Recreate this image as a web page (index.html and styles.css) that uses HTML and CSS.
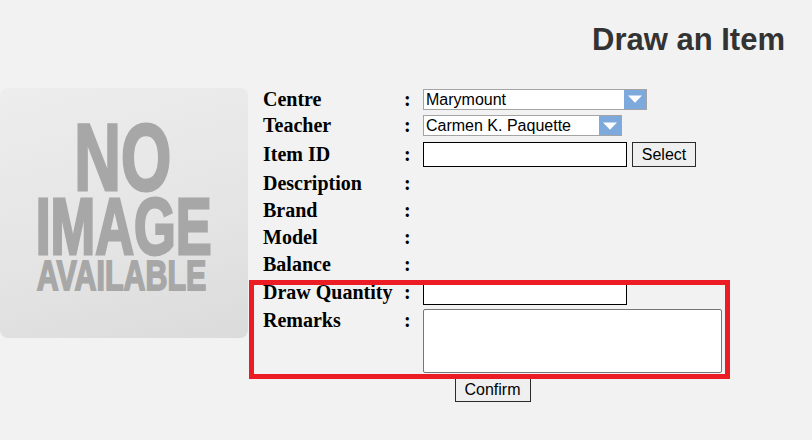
FILE: index.html
```html
<!DOCTYPE html>
<html>
<head>
<meta charset="utf-8">
<link rel="stylesheet" href="styles.css">
</head>
<body>
<div class="header"><h1>Draw an Item</h1></div>
<div class="main">
  <div class="noimage">
    <span class="ni ni-no">NO</span>
    <span class="ni ni-image">IMAGE</span>
    <span class="ni ni-available">AVAILABLE</span>
  </div>
  <div class="form">
    <div class="row r1">
      <span class="label">Centre</span><span class="colon">:</span>
      <span class="dd dd-centre"><select><option>Marymount</option></select><span class="arrow"><svg width="14" height="8" viewBox="0 0 14 8"><path d="M0 0.5 L14 0.5 L7 7.8 Z" fill="#fff"/></svg></span></span>
    </div>
    <div class="row r2">
      <span class="label">Teacher</span><span class="colon">:</span>
      <span class="dd dd-teacher"><select><option>Carmen K. Paquette</option></select><span class="arrow"><svg width="14" height="8" viewBox="0 0 14 8"><path d="M0 0.5 L14 0.5 L7 7.8 Z" fill="#fff"/></svg></span></span>
    </div>
    <div class="row r3">
      <span class="label">Item ID</span><span class="colon">:</span>
      <span class="field"><input type="text" class="txt"><button class="btn btn-select">Select</button></span>
    </div>
    <div class="row">
      <span class="label">Description</span><span class="colon">:</span>
    </div>
    <div class="row">
      <span class="label">Brand</span><span class="colon">:</span>
    </div>
    <div class="row">
      <span class="label">Model</span><span class="colon">:</span>
    </div>
    <div class="row">
      <span class="label">Balance</span><span class="colon">:</span>
    </div>
    <div class="row r8">
      <span class="label">Draw Quantity</span><span class="colon">:</span>
      <input type="text" class="txt">
    </div>
    <div class="row r9">
      <span class="label">Remarks</span><span class="colon">:</span>
      <textarea class="remarks"></textarea>
    </div>
    <div class="actions"><button class="btn btn-confirm">Confirm</button></div>
    <div class="highlight"></div>
  </div>
</div>
</body>
</html>
```
FILE: styles.css
```css
html, body {
  margin: 0;
  padding: 0;
  background: #f2f2f2;
}
body {
  font-family: "Liberation Sans", Arial, sans-serif;
  color: #000;
}
.header {
  padding: 22px 27px 0 0;
  text-align: right;
}
.header h1 {
  margin: 0;
  font-family: "Liberation Sans", Arial, sans-serif;
  font-weight: bold;
  font-size: 31px;
  line-height: 36px;
  color: #333;
}
.main {
  display: flex;
  align-items: flex-start;
  margin-top: 28px;
}
.noimage {
  box-sizing: border-box;
  width: 248px;
  height: 250px;
  margin-top: 2px;
  padding-top: 29px;
  border-radius: 8px;
  background: linear-gradient(165deg, #ededed 0%, #e4e4e4 60%, #dbdbdb 100%);
  overflow: hidden;
  flex: none;
  display: flex;
  flex-direction: column;
  align-items: center;
}
.ni {
  display: block;
  font-family: "Liberation Sans", Arial, sans-serif;
  font-weight: bold;
  color: #a7a7a7;
  -webkit-text-stroke: 3px #a7a7a7;
  white-space: nowrap;
  transform-origin: center;
}
.ni-no {
  font-size: 95px;
  line-height: 80px;
  height: 80px;
  transform: translateX(-1.5px) scaleX(0.68);
}
.ni-image {
  font-size: 80px;
  line-height: 60px;
  height: 60px;
  transform: translateX(-0.5px) scaleX(0.671);
}
.ni-available {
  font-size: 42px;
  line-height: 37px;
  height: 37px;
  -webkit-text-stroke: 1.8px #a7a7a7;
  transform: translateX(-2.5px) scaleX(0.724);
}
.form {
  position: relative;
  margin-left: 15px;
  display: flex;
  flex-direction: column;
}
.row {
  display: flex;
  align-items: center;
  height: 27px;
}
.r1 { height: 26px; }
.r3 { height: 31px; }
.r8 { height: 28px; }
.r9 { height: 67px; align-items: flex-start; }
.r9 .label, .r9 .colon, .r9 .remarks { margin-top: 3px; }
.label {
  width: 141px;
  flex: none;
  font-family: "Liberation Serif", "Times New Roman", serif;
  font-weight: bold;
  font-size: 20px;
  line-height: 23px;
  white-space: nowrap;
}
.colon {
  width: 19px;
  flex: none;
  font-family: "Liberation Serif", "Times New Roman", serif;
  font-weight: bold;
  font-size: 20px;
  line-height: 23px;
}
.dd {
  display: inline-flex;
  box-sizing: border-box;
  height: 21px;
  border: 1px solid #a4a4a4;
  background: #fff;
}
.dd-centre { width: 224px; }
.dd-teacher { width: 199px; }
.dd select {
  -webkit-appearance: none;
  appearance: none;
  border: none;
  outline: none;
  background: #fff;
  flex: 1;
  min-width: 0;
  height: 19px;
  padding: 0 0 0 2px;
  margin: 0;
  font-family: "Liberation Sans", Arial, sans-serif;
  font-size: 16px;
  color: #000;
}
.dd .arrow {
  width: 22px;
  height: 19px;
  flex: none;
  background: #7ea9dc;
  display: flex;
  align-items: center;
  justify-content: center;
}
.dd .arrow svg { display: block; }
.field {
  display: flex;
  align-items: center;
  gap: 5px;
}
.txt {
  box-sizing: border-box;
  width: 204px;
  height: 25px;
  margin: 0;
  border: 1px solid #000;
  background: #fff;
  padding: 0 3px;
  font-family: "Liberation Sans", Arial, sans-serif;
  font-size: 16px;
  outline: none;
}
.btn {
  box-sizing: border-box;
  height: 25px;
  margin: 0;
  padding: 0 8px;
  background: #efefef;
  border: 1px solid #2b2b2b;
  border-radius: 0;
  font-family: "Liberation Sans", Arial, sans-serif;
  font-size: 16px;
  color: #000;
}
.btn-select { width: 64px; }
.btn-confirm { width: 76px; height: 24px; }
.remarks {
  box-sizing: border-box;
  width: 299px;
  height: 64px;
  border: 1px solid #767676;
  border-radius: 2px;
  background: #fff;
  resize: none;
  outline: none;
  padding: 2px;
  margin-left: 0;
  margin-right: 0;
  margin-bottom: 0;
}
.actions {
  display: flex;
  justify-content: center;
  margin-top: 5px;
}
.highlight {
  position: absolute;
  left: -14px;
  top: 194px;
  width: 481px;
  height: 99px;
  box-sizing: border-box;
  border: 5px solid #ec1c24;
  pointer-events: none;
}
```
